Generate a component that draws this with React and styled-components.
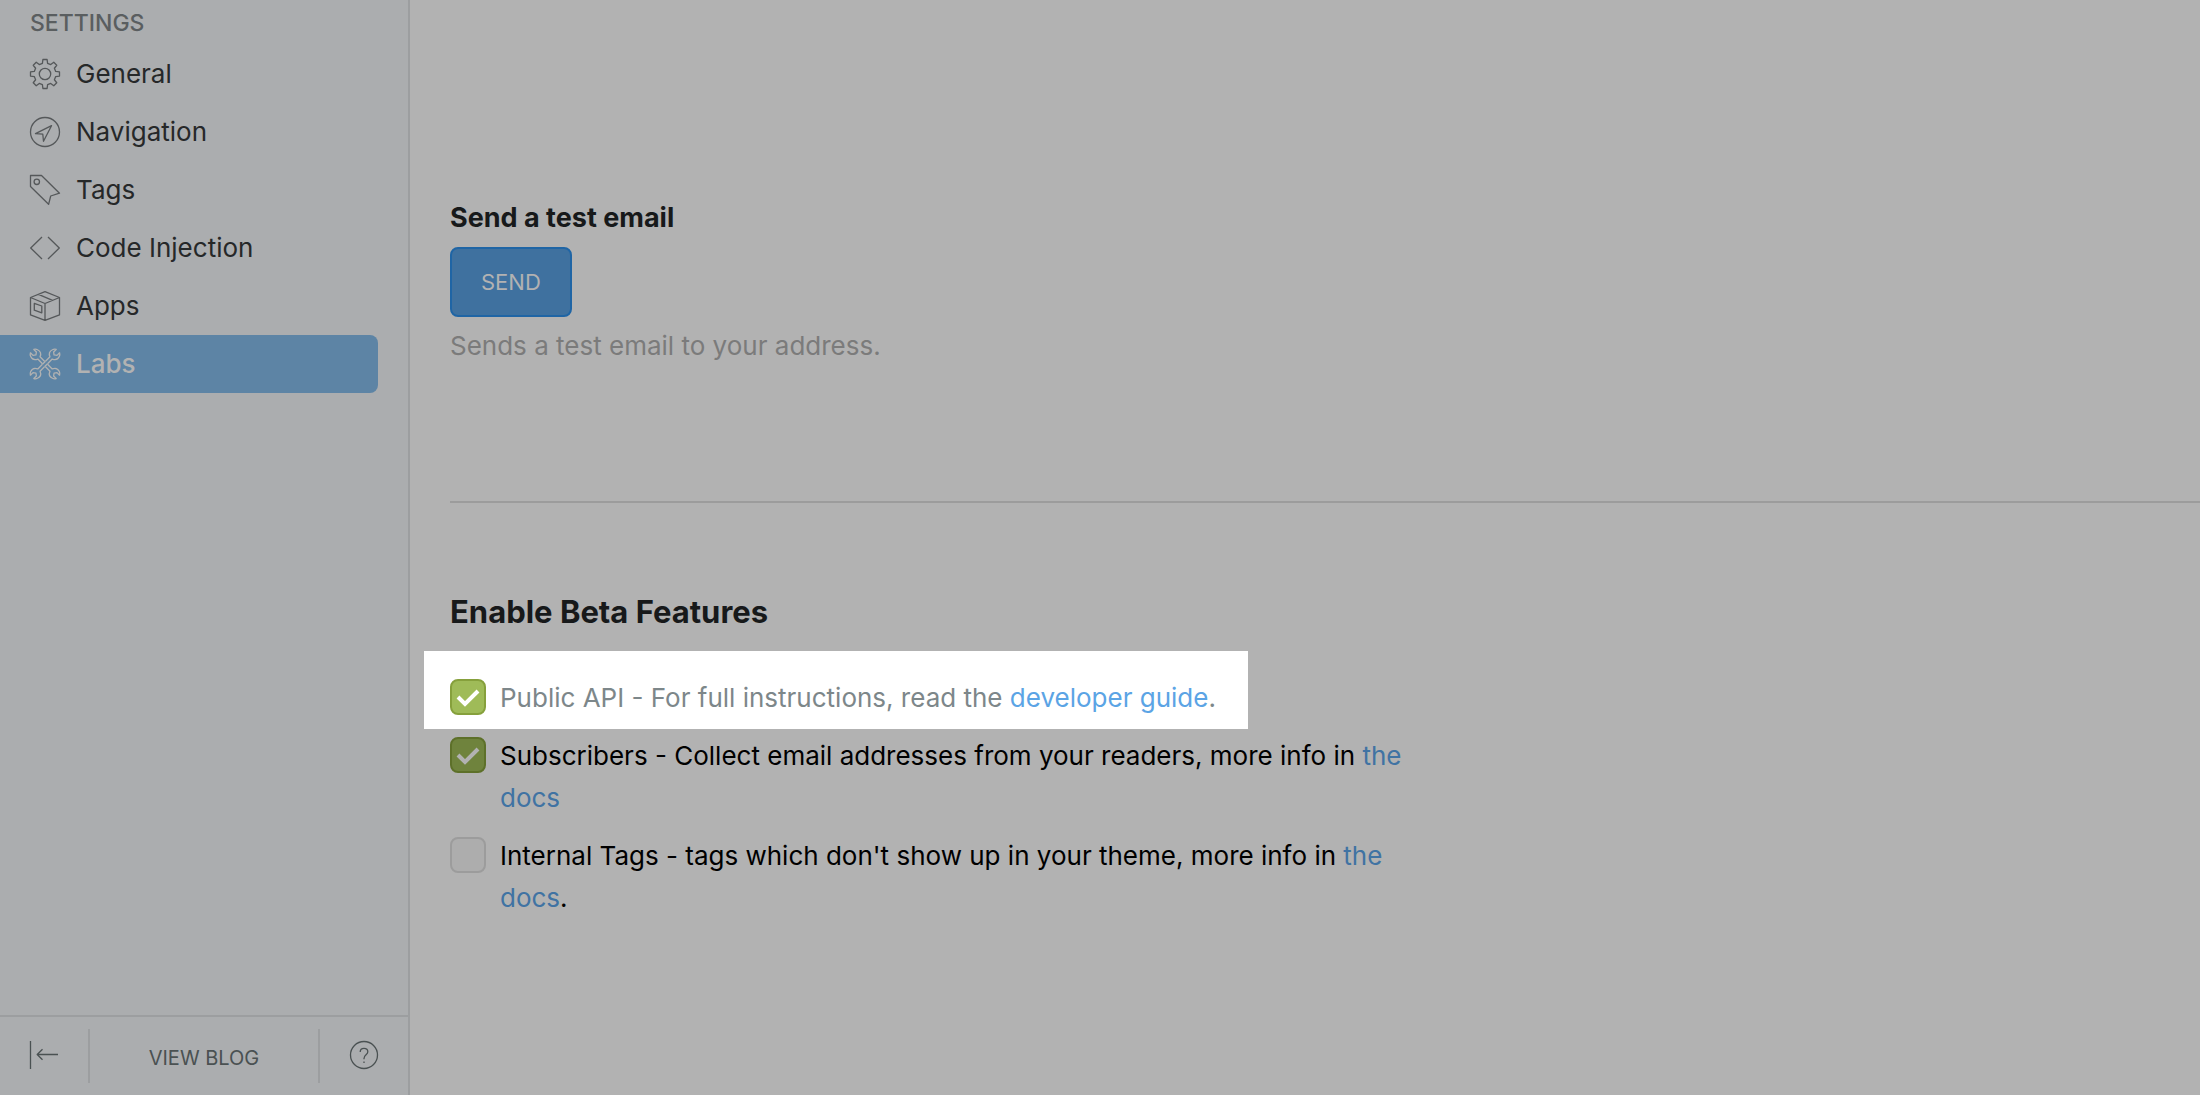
import React from "react";
import styled, { createGlobalStyle, css } from "styled-components";

const GlobalStyle = createGlobalStyle`
  *, *::before, *::after { box-sizing: border-box; }
  body {
    margin: 0;
    background: #b2b2b2;
    color: #000;
    font-family: Inter, "Liberation Sans", sans-serif;
    font-size: 26px;
    line-height: 42px;
  }
`;

const Layout = styled.div`
  display: grid;
  grid-template-columns: 410px minmax(0, 1fr);
  min-height: 100vh;
`;

const Sidebar = styled.aside`
  display: flex;
  flex-direction: column;
  background: #abadaf;
  border-right: 2px solid #9c9ea0;
`;

const SidebarTitle = styled.h2`
  margin: 0;
  padding: 2px 30px 1px;
  color: #5a5e60;
  font-size: 23px;
  font-weight: 500;
`;

const Menu = styled.nav`
  flex: 1;
  display: flex;
  flex-direction: column;
  padding-right: 30px;
`;

const MenuLink = styled.a`
  display: flex;
  align-items: center;
  gap: 16px;
  height: 58px;
  padding-left: 30px;
  border-radius: 0 8px 8px 0;
  color: #262829;
  text-decoration: none;
  ${(p) =>
    p.$active &&
    css`
      background: #5d84a5;
      color: #b2b2b2;
      font-weight: 500;
    `}
`;

const Icon = styled.svg`
  flex: none;
  width: ${(p) => p.$size}px;
  height: ${(p) => p.$size}px;
  fill: none;
  stroke: ${(p) => p.$color};
  stroke-width: 1.3;
  stroke-linejoin: round;
  overflow: visible;
`;

const Footer = styled.footer`
  display: grid;
  grid-template-columns: 90px 1fr 88px;
  align-items: center;
  height: 80px;
  border-top: 2px solid #9c9ea0;
`;

const FooterButton = styled.button`
  display: flex;
  align-items: center;
  justify-content: center;
  height: 54px;
  padding: 0 0 2px;
  border: 0;
  border-right: ${(p) => (p.$divided ? "2px solid #9c9ea0" : "0")};
  background: none;
`;

const FooterLink = styled.a`
  display: flex;
  align-items: center;
  justify-content: center;
  height: 54px;
  padding-top: 3px;
  border-right: 2px solid #9c9ea0;
  color: #4a5152;
  font-size: 20px;
  text-decoration: none;
`;

const Content = styled.main`
  padding-left: 40px;
`;

const TestEmail = styled.section`
  padding: 197px 0 134px;
  border-bottom: 2px solid #9c9c9c;
`;

const Label = styled.h3`
  margin: 0 0 8px;
  color: #17191a;
  font-size: 27px;
  font-weight: 700;
`;

const SendButton = styled.button`
  display: block;
  height: 70px;
  padding: 0 29px;
  border: 2px solid #1f65a5;
  border-radius: 8px;
  background: #3f719f;
  color: #b2b2b2;
  font: inherit;
  font-size: 22px;
`;

const Hint = styled.p`
  margin: 8px 0 0;
  color: #7b7b7b;
`;

const Features = styled.section`
  max-width: 960px;
  padding-top: 88px;
`;

const FeaturesTitle = styled.h3`
  margin: 0 0 18px;
  color: #17191a;
  font-size: 31px;
  font-weight: 700;
`;

const Feature = styled.div`
  display: flex;
  align-items: flex-start;
  gap: 14px;
  margin-top: 16px;
`;

const HighlightedFeature = styled(Feature)`
  width: fit-content;
  margin: 0 0 0 -26px;
  padding: 26px 32px 10px 26px;
  background: #fff;
  color: #7d878a;

  & + ${Feature} { margin-top: 6px; }
`;

const CheckboxFrame = styled.span`
  flex: none;
  display: grid;
  margin-top: 2px;
  > * { grid-area: 1 / 1; }
`;

const Checkbox = styled.input`
  appearance: none;
  width: 36px;
  height: 36px;
  margin: 0;
  border: 2px solid #9c9c9c;
  border-radius: 8px;
  background: #adadad;
  &:checked {
    border-color: ${(p) => (p.$bright ? "#86a03c" : "#5d7029")};
    background: ${(p) => (p.$bright ? "#9fbb58" : "#6f833d")};
  }
`;

const Tick = styled.svg`
  width: 36px;
  height: 36px;
  fill: none;
  stroke: ${(p) => (p.$bright ? "#fff" : "#b2b2b2")};
  stroke-width: 4;
  pointer-events: none;
`;

const TextLink = styled.a`
  color: ${(p) => (p.$bright ? "#5ba4e5" : "#4073a3")};
  text-decoration: none;
`;

const GEAR_TEETH = [0, 45, 90, 135, 180, 225, 270, 315];
const GEAR_POINTS = GEAR_TEETH.flatMap((angle) => {
  const a = (angle * Math.PI) / 180;
  return [[-2.6, -10.7], [-2.1, -14.5], [2.1, -14.5], [2.6, -10.7]].map(([x, y]) =>
    [15 + x * Math.cos(a) - y * Math.sin(a), 15 + x * Math.sin(a) + y * Math.cos(a)]
      .map((n) => n.toFixed(2))
      .join(",")
  );
}).join(" ");

const WRENCH_END =
  "M-1.6 -2V-8.6C-4.6 -9.8 -5.8 -12.6 -4.8 -15.4C-4.4 -16.6 -3.6 -17.6 -2.4 -18.2V-14.6L0 -12.8L2.4 -14.6V-18.2C3.6 -17.6 4.4 -16.6 4.8 -15.4C5.8 -12.6 4.6 -9.8 1.6 -8.6V-2";

const ICONS = {
  gear: (
    <>
      <polygon points={GEAR_POINTS} />
      <circle cx="15" cy="15" r="5.7" />
    </>
  ),
  compass: (
    <>
      <circle cx="15" cy="15" r="14.5" />
      <path d="M21.5 8.7L5.5 16.7L12.8 17.2L13.5 24.3Z" />
    </>
  ),
  tag: (
    <>
      <path d="M.5 .5H11.5L29.5 18.2L20.7 21L18.6 29.3L.5 11.5Z" />
      <circle cx="6.8" cy="6.8" r="2.7" />
    </>
  ),
  code: <path d="M12 4L.7 15L12 26M18 4L29.3 15L18 26" />,
  box: (
    <path d="M15 .6L29.5 6.5V23.8L15 29.4L.5 23.8V6.5ZM.5 6.5L15 12.5L29.5 6.5M15 12.5V29.4M8.5 3.4L22.5 9.4M4.3 12.4L11.8 15V21.8L4.3 19.2Z" />
  ),
  tools: (
    <>
      <g transform="translate(15 15) rotate(45)">
        <path d={WRENCH_END} />
        <path d={WRENCH_END} transform="rotate(180)" />
        <path d="M-1.6 -2V2M1.6 -2V2" />
      </g>
      <g transform="translate(15 15) rotate(-45)">
        <path d={WRENCH_END} />
        <path d={WRENCH_END} transform="rotate(180)" />
      </g>
    </>
  ),
};

const MENU = [
  { label: "General", icon: "gear" },
  { label: "Navigation", icon: "compass" },
  { label: "Tags", icon: "tag" },
  { label: "Code Injection", icon: "code" },
  { label: "Apps", icon: "box" },
  { label: "Labs", icon: "tools", active: true },
];

function CheckField({ id, bright, checked }) {
  const [on, setOn] = React.useState(!!checked);
  return (
    <CheckboxFrame>
      <Checkbox
        id={id}
        type="checkbox"
        checked={on}
        onChange={(e) => setOn(e.target.checked)}
        $bright={bright}
      />
      {on && (
        <Tick viewBox="0 0 36 36" $bright={bright} aria-hidden="true">
          <path d="M8 18L15 25L28 12" />
        </Tick>
      )}
    </CheckboxFrame>
  );
}

export default function App() {
  return (
    <>
      <GlobalStyle />
      <Layout>
        <Sidebar>
          <SidebarTitle>SETTINGS</SidebarTitle>
          <Menu>
            {MENU.map(({ label, icon, active }) => (
              <MenuLink key={label} href="#" $active={active}>
                <Icon viewBox="0 0 30 30" $size={30} $color={active ? "#b2b2b2" : "#55585a"} aria-hidden="true">
                  {ICONS[icon]}
                </Icon>
                {label}
              </MenuLink>
            ))}
          </Menu>
          <Footer>
            <FooterButton $divided aria-label="Collapse menu">
              <Icon viewBox="0 0 28 28" $size={28} $color="#4a5152" aria-hidden="true">
                <path d="M.5 0V28M28 13.5H7.5M12.5 8.2L7.2 13.5L12.5 18.8" />
              </Icon>
            </FooterButton>
            <FooterLink href="#">VIEW BLOG</FooterLink>
            <FooterButton aria-label="Help">
              <Icon viewBox="0 0 28 28" $size={28} $color="#4a5152" aria-hidden="true">
                <circle cx="14" cy="14" r="13.5" />
                <path d="M10.2 11C10.2 8.6 11.8 7.4 14 7.4C16.3 7.4 17.8 8.8 17.8 10.8C17.8 13.8 14 13.8 14 17.4V18.2M14 20.4V22" />
              </Icon>
            </FooterButton>
          </Footer>
        </Sidebar>
        <Content>
          <TestEmail>
            <Label>Send a test email</Label>
            <SendButton type="button">SEND</SendButton>
            <Hint>Sends a test email to your address.</Hint>
          </TestEmail>
          <Features>
            <FeaturesTitle>Enable Beta Features</FeaturesTitle>
            <HighlightedFeature>
              <CheckField id="public-api" bright checked />
              <label htmlFor="public-api">
                Public API - For full instructions, read the{" "}
                <TextLink href="#" $bright>developer guide</TextLink>.
              </label>
            </HighlightedFeature>
            <Feature>
              <CheckField id="subscribers" checked />
              <label htmlFor="subscribers">
                Subscribers - Collect email addresses from your readers, more info in{" "}
                <TextLink href="#">the docs</TextLink>
              </label>
            </Feature>
            <Feature>
              <CheckField id="internal-tags" />
              <label htmlFor="internal-tags">
                Internal Tags - tags which don't show up in your theme, more info in{" "}
                <TextLink href="#">the docs</TextLink>.
              </label>
            </Feature>
          </Features>
        </Content>
      </Layout>
    </>
  );
}
